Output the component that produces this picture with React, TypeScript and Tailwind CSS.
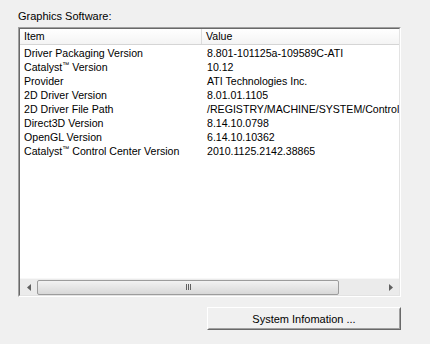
const rows: [string, string][] = [
  ["Driver Packaging Version", "8.801-101125a-109589C-ATI"],
  ["Catalyst|Version", "10.12"],
  ["Provider", "ATI Technologies Inc."],
  ["2D Driver Version", "8.01.01.1105"],
  ["2D Driver File Path", "/REGISTRY/MACHINE/SYSTEM/ControlSet001/Control/CLASS"],
  ["Direct3D Version", "8.14.10.0798"],
  ["OpenGL Version", "6.14.10.10362"],
  ["Catalyst|Control Center Version", "2010.1125.2142.38865"],
];

function Label({ text }: { text: string }) {
  // "|" marks where a small trademark sign goes
  const parts = text.split("|");
  if (parts.length === 1) return <>{text}</>;
  return (
    <>
      {parts[0]}
      <span className="text-[7px] align-top leading-[10px]">{"\u2122"}</span> {parts[1]}
    </>
  );
}

export default function App() {
  return (
    <div
      className="w-[430px] h-[344px] bg-[#f0f0f0] text-[10.6px] text-black pt-[9px] pl-[18px]"
      style={{ fontFamily: '"Liberation Sans", Arial, sans-serif' }}
    >
      <div className="h-[18px] leading-[14px] text-[11px]">Graphics Software:</div>

      {/* list view, sunken border */}
      <div className="w-[383px] h-[270px] border border-t-[#a0a0a0] border-l-[#a0a0a0] border-b-white border-r-white">
        <div className="w-full h-full border border-t-[#696969] border-l-[#696969] border-b-[#e3e3e3] border-r-[#e3e3e3] bg-white flex flex-col">
          {/* header */}
          <div className="flex h-[16px] border-b border-[#d5d5d5] bg-gradient-to-b from-white to-[#f4f4f4] leading-[15px]">
            <div className="w-[182px] pl-[4px] border-r border-[#dcdcdc]">Item</div>
            <div className="flex-1 pl-[4px]">Value</div>
          </div>

          {/* rows */}
          <div className="flex-1 overflow-hidden pt-[1px]">
            {rows.map(([k, v]) => (
              <div key={k} className="flex h-[14px] leading-[14px] whitespace-nowrap">
                <div className="w-[183px] pl-[4px] shrink-0">
                  <Label text={k} />
                </div>
                <div className="pl-[4px] overflow-hidden">{v}</div>
              </div>
            ))}
          </div>

          {/* horizontal scrollbar */}
          <div className="h-[17px] flex items-center bg-[#ebebeb] border-t border-[#f7f7f7]">
            <div className="w-[17px] h-full flex items-center justify-center">
              <svg width="4" height="7" viewBox="0 0 4 7">
                <path d="M4 0 L0 3.5 L4 7 Z" fill="#606060" />
              </svg>
            </div>
            <div className="w-[302px] h-[15px] rounded-[2px] border border-[#9c9c9c] bg-gradient-to-b from-[#f2f2f2] to-[#d8d8d8] flex items-center justify-center">
              <div className="flex gap-[1px]">
                <div className="w-[1px] h-[6px] bg-[#606060]" />
                <div className="w-[1px] h-[6px] bg-[#606060]" />
                <div className="w-[1px] h-[6px] bg-[#606060]" />
              </div>
            </div>
            <div className="flex-1" />
            <div className="w-[17px] h-full flex items-center justify-center">
              <svg width="4" height="7" viewBox="0 0 4 7">
                <path d="M0 0 L4 3.5 L0 7 Z" fill="#606060" />
              </svg>
            </div>
          </div>
        </div>
      </div>

      {/* button */}
      <div className="flex justify-end w-[383px] mt-[10px]">
        <div className="w-[194px] h-[23px] border border-t-white border-l-white border-b-[#696969] border-r-[#696969]">
          <div className="w-full h-full border border-t-[#f0f0f0] border-l-[#f0f0f0] border-b-[#a0a0a0] border-r-[#a0a0a0] bg-[#f0f0f0] flex items-center justify-center leading-[14px] text-[11px]">
            System Infomation ...
          </div>
        </div>
      </div>
    </div>
  );
}
